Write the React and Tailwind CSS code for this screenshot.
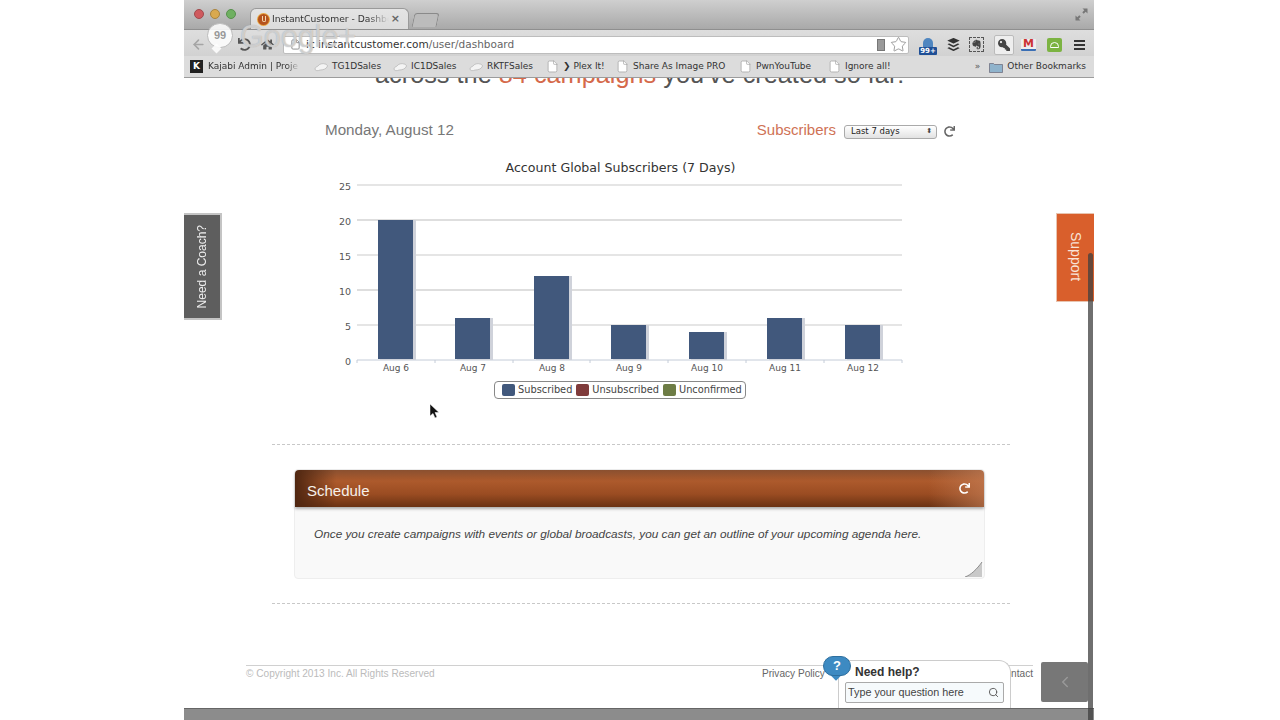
import React from 'react';
import { ArrowLeft, ChevronLeft, File, Search, Star } from 'lucide-react';
import { FaBuffer, FaEvernote, FaHome, FaKey, FaRedo } from 'react-icons/fa';

const bookmarks = [
    { label: 'TG1DSales', width: 'w-[79px]', kind: 'cloud' },
    { label: 'IC1DSales', width: 'w-[76px]', kind: 'cloud' },
    { label: 'RKTFSales', width: 'w-[77px]', kind: 'cloud' },
    { label: '❯ Plex It!', width: 'w-[70px]', kind: 'page' },
    { label: 'Share As Image PRO', width: 'w-[123px]', kind: 'page' },
    { label: 'PwnYouTube', width: 'w-[89px]', kind: 'page' },
    { label: 'Ignore all!', width: 'w-[70px]', kind: 'page' },
];

const bars = [
    { label: 'Aug 6', x: 378, value: 20 },
    { label: 'Aug 7', x: 455, value: 6 },
    { label: 'Aug 8', x: 534, value: 12 },
    { label: 'Aug 9', x: 611, value: 5 },
    { label: 'Aug 10', x: 689, value: 4 },
    { label: 'Aug 11', x: 767, value: 6 },
    { label: 'Aug 12', x: 845, value: 5 },
];

const ticks = [0, 5, 10, 15, 20, 25];

const Cloud = () => (
    <svg width="14" height="10" viewBox="0 0 14 10" className="shrink-0 mr-[4px]">
        <path d="M1 7c0-2 2-2 3-3 1-2 5-3 7-2 2 0 3 2 2 3-1 2-4 3-7 3-2 1-5 1-5-1z" fill="#f4f4f4" stroke="#a9a9a9" strokeWidth="0.6" />
    </svg>
);

const Chart = () => (
    <svg viewBox="330 155 580 223" width="580" height="223" className="ml-[146px] mt-[15px] shrink-0">
        <text x="620.5" y="172" textAnchor="middle" fontSize="12.6" fill="#333" fontFamily="'DejaVu Sans', sans-serif">Account Global Subscribers (7 Days)</text>
        {ticks.map((t) => (
            <g key={t}>
                <line x1="357" x2="902" y1={360 - t * 7} y2={360 - t * 7} stroke={t === 0 ? '#c4ccd8' : t % 2 ? '#dcdcdc' : '#bdbdbd'} strokeWidth={t % 2 ? 1.5 : 1} />
                <text x="351" y={364.500 - t * 7} textAnchor="end" fontSize="9.5" fill="#555" fontFamily="'DejaVu Sans', sans-serif">{t}</text>
            </g>
        ))}
        {[357, 435, 513, 590, 668, 746, 824, 902].map((x) => (
            <line key={x} x1={x} x2={x} y1="360" y2="363" stroke="#c4ccd8" />
        ))}
        {bars.map((b) => (
            <g key={b.label}>
                <rect x={b.x + 2} y={360 - b.value * 7} width="36" height={b.value * 7} fill="#cfd2da" />
                <rect x={b.x} y={360 - b.value * 7} width="35" height={b.value * 7 - 1} fill="#41587c" />
                <text x={b.x + 18} y="371" textAnchor="middle" fontSize="9" fill="#555" fontFamily="'DejaVu Sans', sans-serif">{b.label}</text>
            </g>
        ))}
    </svg>
);

const LegendItem = ({ color, label }) => (
    <div className="flex items-center gap-[3px]">
        <span className={`w-[13px] h-[12px] rounded-[2px] ${color}`} />
        <span>{label}</span>
    </div>
);

export default function App() {
    return (
        <div className="relative h-[720px] overflow-hidden bg-white font-['Liberation_Sans',sans-serif]">
            <div className="relative ml-[184px] flex h-full w-[910px] flex-col overflow-hidden">
                {/* browser chrome */}
                <div className="z-10 shrink-0 font-['DejaVu_Sans',sans-serif]">
                    <div className="flex h-[30px] items-end bg-gradient-to-b from-[#cfcfcf] to-[#a9a9a9] border-b border-[#8f8f8f]">
                        <div className="mb-[10px] ml-[10px] flex gap-[6px]">
                            <span className="h-[10px] w-[10px] rounded-full bg-[#cf5a5e] border border-[#a04a4c]" />
                            <span className="h-[10px] w-[10px] rounded-full bg-[#d9a94f] border border-[#a9843f]" />
                            <span className="h-[10px] w-[10px] rounded-full bg-[#6fb061] border border-[#57904c]" />
                        </div>
                        <div className="ml-[14px] flex h-[21px] w-[159px] items-center rounded-t-[6px] bg-gradient-to-b from-[#e4e4e4] to-[#dcdcdc] pl-[7px] pr-[8px] text-[9.2px] text-[#333] border-t border-x border-[#9a9a9a]">
                            <span className="mr-[3px] flex h-[11px] w-[11px] shrink-0 items-center justify-center rounded-full bg-[#b5531e] ring-1 ring-[#e8a33a]">
                                <span className="h-[6px] w-[4px] rounded-b-full border border-t-0 border-[#f5d9b0]" />
                            </span>
                            <span className="flex-1 overflow-hidden whitespace-nowrap [mask-image:linear-gradient(90deg,#000_82%,transparent)]">InstantCustomer - Dashbo</span>
                            <span className="ml-[2px] text-[11px] font-bold text-[#666]">×</span>
                        </div>
                        <div className="mb-[2px] ml-[4px] h-[14px] w-[25px] -skew-x-12 rounded-t-[3px] border border-b-0 border-[#8a8a8a] bg-[#bcbcbc]" />
                        <div className="ml-auto mb-[8px] mr-[6px] text-[#777]">
                            <svg width="13" height="13" viewBox="0 0 13 13" fill="currentColor">
                                <path d="M7.5 0.5h5v5l-1.8-1.8-2 2-1.4-1.4 2-2zM5.5 12.5h-5v-5l1.8 1.8 2-2 1.4 1.4-2 2z" />
                            </svg>
                        </div>
                    </div>
                    <div className="flex h-[26px] items-center bg-gradient-to-b from-[#dedede] to-[#d2d2d2] pt-[3px]">
                        <ArrowLeft size={15} strokeWidth={2.5} className="ml-[7px] text-[#a5a5a5]" />
                        <FaRedo size={13} className="ml-[32px] -scale-x-100 text-[#555]" />
                        <FaHome size={13} className="ml-[10px] text-[#555]" />
                        <div className="ml-[9px] flex h-[18px] w-[626px] items-center rounded-[2px] border border-[#bdbdbd] bg-white pl-[6px] text-[10.5px] text-[#333]">
                            <File size={11} className="mr-[5px] text-[#888]" />
                            <span className="whitespace-nowrap">ic instantcustomer.com<span className="text-[#666]">/user/dashboard</span></span>
                            <div className="ml-auto mr-[1px] flex items-center gap-[5px] text-[#777]">
                                <span className="h-[12px] w-[8px] bg-[#9a9a9a] border border-[#777]" />
                                <Star size={17} strokeWidth={1} />
                            </div>
                        </div>
                        <div className="ml-[10px] flex h-[20px] w-[18px] flex-col items-center justify-end">
                            <span className="h-[9px] w-[10px] rounded-t-full bg-[#4f86c0]" />
                            <span className="rounded-[1px] bg-[#1f4f96] px-[1px] text-[7px] font-bold leading-[8px] text-white">99+</span>
                        </div>
                        <FaBuffer size={15} className="ml-[9px] text-[#333]" />
                        <span className="ml-[8px] flex h-[15px] w-[15px] items-center justify-center border border-dashed border-[#555]">
                            <FaEvernote size={11} className="text-[#444]" />
                        </span>
                        <span className="ml-[10px] flex h-[20px] w-[20px] items-center justify-center rounded-[2px] border border-[#bbb] bg-[#eee]">
                            <FaKey size={12} className="-scale-x-100 text-[#444]" />
                        </span>
                        <span className="ml-[7px] flex h-[12px] w-[15px] items-center justify-center rounded-[1px] border-b-2 border-[#3b6fb5] bg-[#eee] text-[11px] font-bold leading-none text-[#c33]">M</span>
                        <span className="ml-[11px] flex h-[14px] w-[15px] items-center justify-center rounded-[2px] bg-[#7cb342]">
                            <span className="h-[6px] w-[9px] rounded-t-full border border-white" />
                        </span>
                        <span className="ml-[12px] flex w-[11px] flex-col gap-[2px]">
                            <span className="h-[2px] bg-[#333]" />
                            <span className="h-[2px] bg-[#333]" />
                            <span className="h-[2px] bg-[#333]" />
                        </span>
                    </div>
                    <div className="flex h-[22px] items-center bg-[#dcdcdc] border-b border-[#9c9c9c] pl-[6px] text-[9px] text-[#333]">
                        <div className="flex w-[124px] items-center">
                            <span className="mr-[5px] flex h-[13px] w-[13px] items-center justify-center bg-[#222] text-[9px] font-bold leading-none text-white">K</span>
                            <span className="w-[92px] overflow-hidden whitespace-nowrap [mask-image:linear-gradient(90deg,#000_85%,transparent)]">Kajabi Admin | Proje</span>
                        </div>
                        {bookmarks.map((b) => (
                            <div key={b.label} className={`flex items-center whitespace-nowrap ${b.width}`}>
                                {b.kind === 'cloud' ? <Cloud /> : <File size={13} strokeWidth={1} className="mr-[4px] shrink-0 fill-white text-[#888]" />}
                                {b.label}
                            </div>
                        ))}
                        <span className="ml-auto mr-[9px] text-[#555]">»</span>
                        <svg width="14" height="12" viewBox="0 0 14 12" className="mr-[4px]">
                            <path d="M0.5 2.5h4l1 1h8v8h-13z" fill="#8fb3cc" stroke="#667" strokeWidth="0.7" />
                        </svg>
                        <span className="mr-[8px] whitespace-nowrap">Other Bookmarks</span>
                    </div>
                </div>

                {/* page */}
                <div className="flex min-h-0 flex-1 flex-col overflow-hidden">
                    <div className="-mt-[19px] h-[30px] shrink-0 whitespace-nowrap pl-[191px] text-[25.3px] leading-[30px] text-[#555]">
                        across the <span className="text-[#d5694a]">84 campaigns</span> you've created so far!
                    </div>
                    <div className="mt-[31px] flex h-[20px] shrink-0 items-center pl-[141px] pr-[139px]">
                        <span className="text-[15.2px] text-[#777]">Monday, August 12</span>
                        <span className="ml-auto text-[15px] text-[#cf7255]">Subscribers</span>
                        <div className="ml-[8px] mt-[3px] flex h-[14px] w-[93px] items-center justify-between rounded-[3px] border border-[#aaa] bg-gradient-to-b from-white to-[#e2e2e2] pl-[6px] pr-[4px] font-['DejaVu_Sans',sans-serif] text-[8.5px] text-[#222]">
                            Last 7 days
                            <span className="text-[7px] leading-none text-[#444]">⬍</span>
                        </div>
                        <FaRedo size={11} className="ml-[7px] mt-[2px] text-[#666]" />
                    </div>
                    <Chart />
                    <div className="ml-[310px] mt-[3px] flex h-[18px] w-[252px] shrink-0 items-center gap-[4px] self-start rounded-[4px] border border-[#888] pl-[7px] font-['DejaVu_Sans',sans-serif] text-[9.8px] text-[#444]">
                        <LegendItem color="bg-[#41587c]" label="Subscribed" />
                        <LegendItem color="bg-[#7f3b3b]" label="Unsubscribed" />
                        <LegendItem color="bg-[#6d7c45]" label="Unconfirmed" />
                    </div>
                    <div className="ml-[88px] mt-[45px] w-[738px] shrink-0 border-t border-dashed border-[#c8c8c8]" />

                    <div className="ml-[110px] mt-[24px] h-[110px] w-[691px] shrink-0 rounded-[4px] border border-[#eee] bg-[#f9f9f9]">
                        <div className="flex h-[37px] items-center justify-between rounded-t-[4px] bg-[linear-gradient(90deg,#4f2610_0%,rgba(120,60,25,0)_6%,rgba(120,60,25,0)_92%,rgba(200,130,90,0.6)_100%),linear-gradient(180deg,#8a5030_0%,#ad5a2c_30%,#9a4c22_65%,#6a3213_100%)] pl-[12px] pr-[14px] pt-[6px] shadow-[0_2px_3px_rgba(0,0,0,0.3)]">
                            <span className="text-[15px] text-[#f6f0ea]">Schedule</span>
                            <FaRedo size={11} className="-mt-[6px] text-white" />
                        </div>
                        <p className="pl-[19px] pt-[19px] text-[11.8px] italic text-[#444]">
                            Once you create campaigns with events or global broadcasts, you can get an outline of your upcoming agenda here.
                        </p>
                    </div>
                    <div className="ml-[88px] mt-[24px] w-[738px] shrink-0 border-t border-dashed border-[#c8c8c8]" />

                    <div className="ml-[62px] mt-[61px] flex w-[787px] shrink-0 items-start justify-between border-t border-[#d0d0d0] pt-[1px] text-[10.1px] leading-[14px]">
                        <span className="text-[#bbb]">© Copyright 2013 Inc. All Rights Reserved</span>
                        <div className="flex w-[271px] justify-between text-[#666]">
                            <span>Privacy Policy</span>
                            <span>Contact</span>
                        </div>
                    </div>
                </div>
                <div className="h-[12px] shrink-0 border-t border-[#666] bg-[#8c8c8c]" />

                {/* overlays */}
                <div className="absolute left-[23px] top-[23px] z-20 flex h-[25px] w-[26px] items-center justify-center rounded-full border border-[#bbb] bg-white/85 text-[11px] font-bold text-[#999]">99</div>
                <div className="absolute left-[29px] top-[45px] z-20 h-[7px] w-[7px] rotate-45 bg-white/85" />
                <div className="absolute left-[56px] top-[18px] z-20 text-[30.5px] leading-[36px] text-white/50 [text-shadow:0_0_1px_#999]">Google+</div>

                <div className="absolute left-0 top-[213px] flex h-[107px] w-[38px] items-center justify-center border-y-2 border-r-2 border-[#c4c4c4] bg-[#5e5e5e]">
                    <span className="rotate-180 text-[12px] text-[#eee] [writing-mode:vertical-rl]">Need a Coach?</span>
                </div>
                <div className="absolute right-0 top-[213px] flex h-[89px] w-[38px] justify-center border-y border-l border-[#e8c4b0] bg-[#d95f2c] pt-[18px]">
                    <span className="text-[14px] text-[#f8e4d8] [writing-mode:vertical-rl]">Support</span>
                </div>
                <div className="absolute bottom-0 right-[1px] top-[253px] w-[5px] rounded-t-[3px] bg-[#3f3f3f]/75" />

                <div className="absolute left-[857px] top-[662px] flex h-[40px] w-[47px] items-center justify-center rounded-[2px] bg-[#777]">
                    <ChevronLeft size={18} className="text-[#999]" />
                </div>

                <div className="absolute left-[654px] top-[660px] h-[48px] w-[173px] rounded-t-[12px] border border-b-0 border-[#ccc] bg-white px-[6px]">
                    <div className="pl-[10px] pt-[4px] text-[12px] font-bold leading-[14px] text-[#333]">Need help?</div>
                    <div className="mt-[3px] flex h-[21px] items-center justify-between rounded-[2px] border border-[#aaa] bg-[#f6fafc] pl-[2px] pr-[4px] text-[10.8px] text-[#444]">
                        Type your question here
                        <Search size={11} className="text-[#555]" />
                    </div>
                </div>
                <div className="absolute left-[648px] top-[671px] h-[8px] w-[8px] rotate-45 bg-[#3d8ac2]" />
                <div className="absolute left-[639px] top-[656px] flex h-[20px] w-[28px] items-center justify-center rounded-full border border-[#2d6f9f] bg-[#3d8ac2] text-[13px] font-bold text-white">?</div>

                <div className="absolute left-[781px] top-[561px]">
                    <svg width="18" height="16" viewBox="0 0 18 16">
                        <path d="M0 16c6-2 12-8 17-15v15z" fill="#c9c9c9" />
                        <path d="M0 16c6-2 12-8 17-15" fill="none" stroke="#8e8e8e" />
                    </svg>
                </div>
                <div className="absolute left-[246px] top-[404px]">
                    <svg width="10" height="15" viewBox="0 0 10 15">
                        <path d="M0 0v12l3-2.500 2 4.500 2-1-2-4.500h4z" fill="#111" stroke="#fff" strokeWidth="0.5" />
                    </svg>
                </div>
            </div>
        </div>
    );
}
